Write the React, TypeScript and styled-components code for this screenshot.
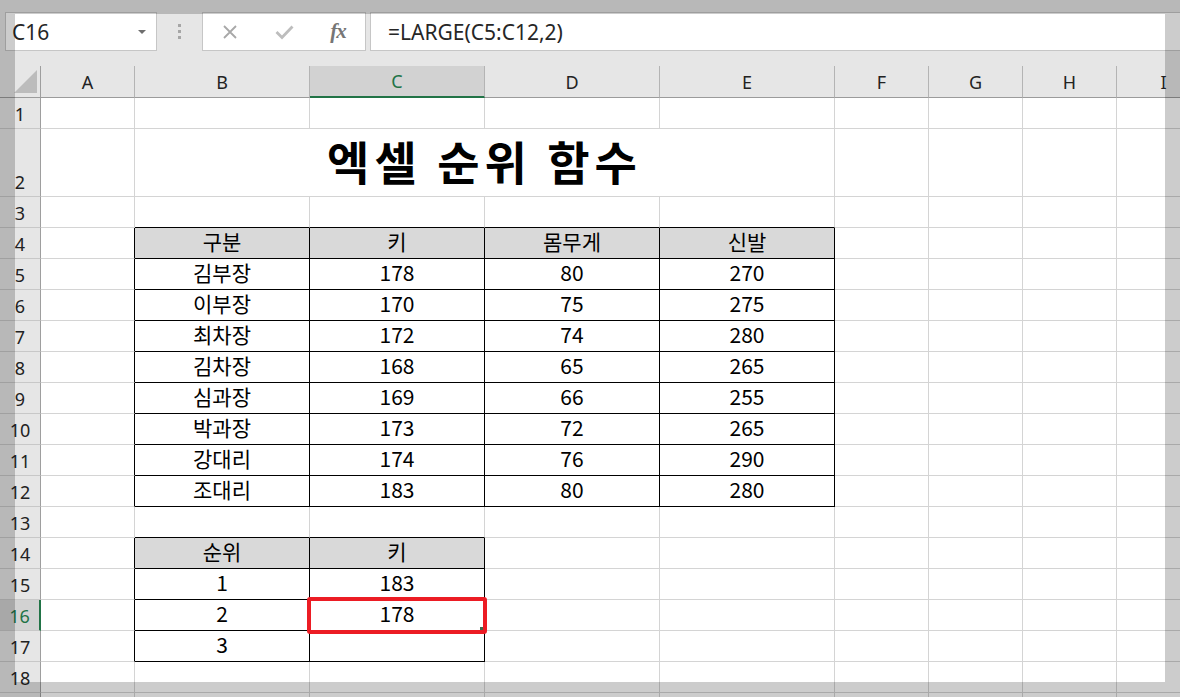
import styled, { createGlobalStyle } from "styled-components";

const GlobalStyle = createGlobalStyle`
  html, body {
    margin: 0;
    padding: 0;
  }
  body {
    font-family: "Noto Sans", "Noto Sans CJK KR", sans-serif;
    background: #e6e6e6;
  }
  * {
    box-sizing: border-box;
  }
`;

const Window = styled.div`
  position: relative;
  width: 1180px;
  height: 697px;
  overflow: hidden;
  background: #e6e6e6;
`;

const FormulaBar = styled.div`
  display: flex;
  align-items: stretch;
  height: 39px;
  margin-top: 12px;
  padding-left: 5px;
`;

const NameBox = styled.div`
  width: 152px;
  display: flex;
  align-items: center;
  justify-content: space-between;
  padding: 0 10px 0 6px;
  background: #fff;
  border: 1px solid #c6c6c6;
  font-size: 21px;
  color: #262626;
`;

const Caret = styled.span`
  width: 0;
  height: 0;
  border-left: 4px solid transparent;
  border-right: 4px solid transparent;
  border-top: 4px solid #6e6e6e;
`;

const Grip = styled.div`
  width: 45px;
  display: flex;
  flex-direction: column;
  align-items: center;
  justify-content: center;
  gap: 3px;
  span {
    width: 3px;
    height: 3px;
    background: #a6a6a6;
  }
`;

const ButtonsBox = styled.div`
  width: 164px;
  display: flex;
  background: #fff;
  border: 1px solid #c6c6c6;
`;

const BarButton = styled.div`
  width: 54px;
  display: flex;
  align-items: center;
  justify-content: center;
`;

const Fx = styled.span`
  font-family: "Liberation Serif", "DejaVu Serif", serif;
  font-style: italic;
  font-weight: 700;
  font-size: 21px;
  color: #767676;
  letter-spacing: -1px;
`;

const FormulaInput = styled.div`
  flex: 1;
  margin-left: 4px;
  display: flex;
  align-items: center;
  padding-left: 17px;
  background: #fff;
  border: 1px solid #c6c6c6;
  border-right: none;
  font-size: 21px;
  color: #262626;
`;

const Sheet = styled.div`
  display: grid;
  grid-template-columns: 41px 94px repeat(4, 175px) repeat(4, 94px);
  grid-template-rows: 32px 31px 68px repeat(16, 31px);
  margin-top: 15px;
  background: #fff;
`;

const Corner = styled.div`
  display: flex;
  align-items: flex-end;
  justify-content: flex-end;
  padding: 0 3px 4px 0;
  background: #e6e6e6;
  border-right: 1px solid #9e9e9e;
  border-bottom: 1px solid #9b9b9b;
`;

const ColHeader = styled.div<{ $active?: boolean }>`
  display: flex;
  align-items: center;
  justify-content: center;
  font-size: 18px;
  color: ${(p) => (p.$active ? "#217346" : "#222")};
  background: ${(p) => (p.$active ? "#d2d2d2" : "#e6e6e6")};
  border-right: 1px solid #b4b4b4;
  border-bottom: ${(p) => (p.$active ? "2px solid #217346" : "1px solid #9b9b9b")};
`;

const RowHeader = styled.div<{ $active?: boolean }>`
  display: flex;
  align-items: flex-end;
  justify-content: center;
  padding-bottom: 2px;
  font-size: 18px;
  color: ${(p) => (p.$active ? "#217346" : "#222")};
  background: ${(p) => (p.$active ? "#d2d2d2" : "#e6e6e6")};
  border-bottom: 1px solid #c8c8c8;
  border-right: ${(p) => (p.$active ? "2px solid #217346" : "1px solid #9e9e9e")};
`;

const Cell = styled.div<{ $right: string; $bottom: string; $head?: boolean }>`
  display: flex;
  align-items: center;
  justify-content: center;
  padding-bottom: 4px;
  font-family: "Noto Sans CJK KR", "Noto Sans", sans-serif;
  font-size: 21px;
  line-height: 1;
  color: #000;
  background: ${(p) => (p.$head ? "#d9d9d9" : "#fff")};
  border-right: 1px solid ${(p) => p.$right};
  border-bottom: 1px solid ${(p) => p.$bottom};
`;

const TitleCell = styled.div`
  grid-column: span 4;
  display: flex;
  align-items: flex-end;
  justify-content: center;
  padding-bottom: 8px;
  font-family: "Noto Sans CJK KR", sans-serif;
  font-weight: 700;
  font-size: 46px;
  line-height: 1.2;
  letter-spacing: 5px;
  color: #000;
  border-right: 1px solid #d4d4d4;
  border-bottom: 1px solid #d4d4d4;
`;

const Dim = styled.div<{ $top: number; $left: number; $width: number; $height: number }>`
  position: absolute;
  top: ${(p) => p.$top}px;
  left: ${(p) => p.$left}px;
  width: ${(p) => p.$width}px;
  height: ${(p) => p.$height}px;
  background: rgba(0, 0, 0, 0.2);
  pointer-events: none;
`;

const RedMark = styled.div`
  position: absolute;
  left: 307px;
  top: 597px;
  width: 180px;
  height: 37px;
  border: 4px solid #ec1c24;
  border-radius: 3px;
`;

const FillHandle = styled.div`
  position: absolute;
  left: 480px;
  top: 627px;
  width: 3px;
  height: 3px;
  background: #3e6b4f;
`;

const columns = ["A", "B", "C", "D", "E", "F", "G", "H", "I"];

const mainTable = [
  ["구분", "키", "몸무게", "신발"],
  ["김부장", "178", "80", "270"],
  ["이부장", "170", "75", "275"],
  ["최차장", "172", "74", "280"],
  ["김차장", "168", "65", "265"],
  ["심과장", "169", "66", "255"],
  ["박과장", "173", "72", "265"],
  ["강대리", "174", "76", "290"],
  ["조대리", "183", "80", "280"],
];

const rankTable = [
  ["순위", "키"],
  ["1", "183"],
  ["2", "178"],
  ["3", ""],
];

const GRID = "#d4d4d4";
const LINE = "#000";

// c: 1 = A ... 9 = I
const inTable = (r: number, c: number) =>
  (r >= 4 && r <= 12 && c >= 2 && c <= 5) || (r >= 14 && r <= 17 && c >= 2 && c <= 3);

const valueAt = (r: number, c: number) => {
  if (r >= 4 && r <= 12 && c >= 2 && c <= 5) return mainTable[r - 4][c - 2];
  if (r >= 14 && r <= 17 && c >= 2 && c <= 3) return rankTable[r - 14][c - 2];
  return "";
};

function SheetCell({ r, c }: { r: number; c: number }) {
  const right = inTable(r, c) || inTable(r, c + 1) ? LINE : GRID;
  const bottom = inTable(r, c) || inTable(r + 1, c) ? LINE : GRID;
  const head = inTable(r, c) && (r === 4 || r === 14);
  return (
    <Cell $right={right} $bottom={bottom} $head={head}>
      {valueAt(r, c)}
    </Cell>
  );
}

function App() {
  const rows = Array.from({ length: 18 }, (_, i) => i + 1);
  return (
    <Window>
      <GlobalStyle />
      <FormulaBar>
        <NameBox>
          C16
          <Caret />
        </NameBox>
        <Grip>
          <span />
          <span />
          <span />
        </Grip>
        <ButtonsBox>
          <BarButton>
            <svg width="16" height="16" viewBox="0 0 16 16">
              <path d="M2 2 L14 14 M14 2 L2 14" stroke="#a8a8a8" strokeWidth="1.8" fill="none" />
            </svg>
          </BarButton>
          <BarButton>
            <svg width="19" height="16" viewBox="0 0 19 16">
              <path d="M1.5 8 L7 13.5 L17.5 2.5" stroke="#bdbdbd" strokeWidth="2.8" fill="none" />
            </svg>
          </BarButton>
          <BarButton>
            <Fx>fx</Fx>
          </BarButton>
        </ButtonsBox>
        <FormulaInput>=LARGE(C5:C12,2)</FormulaInput>
      </FormulaBar>

      <Sheet>
        <Corner>
          <svg width="23" height="23" viewBox="0 0 23 23">
            <polygon points="23,0 23,23 0,23" fill="#bcbcbc" />
          </svg>
        </Corner>
        {columns.map((col) => (
          <ColHeader key={col} $active={col === "C"}>
            {col}
          </ColHeader>
        ))}
        {rows.map((r) => (
          <>
            <RowHeader key={`h${r}`} $active={r === 16}>
              {r}
            </RowHeader>
            {r === 2 ? (
              <>
                <SheetCell r={2} c={1} />
                <TitleCell>엑셀 순위 함수</TitleCell>
                {[6, 7, 8, 9].map((c) => (
                  <SheetCell key={c} r={2} c={c} />
                ))}
              </>
            ) : (
              columns.map((col, i) => <SheetCell key={`${r}${col}`} r={r} c={i + 1} />)
            )}
          </>
        ))}
        <RowHeader />
        {columns.map((col, i) => (
          <SheetCell key={`19${col}`} r={19} c={i + 1} />
        ))}
      </Sheet>

      <FillHandle />
      <RedMark />

      <Dim $top={0} $left={0} $width={1180} $height={14} />
      <Dim $top={14} $left={0} $width={15} $height={683} />
      <Dim $top={14} $left={1165} $width={15} $height={683} />
      <Dim $top={682} $left={15} $width={1150} $height={15} />
    </Window>
  );
}

export default App;
